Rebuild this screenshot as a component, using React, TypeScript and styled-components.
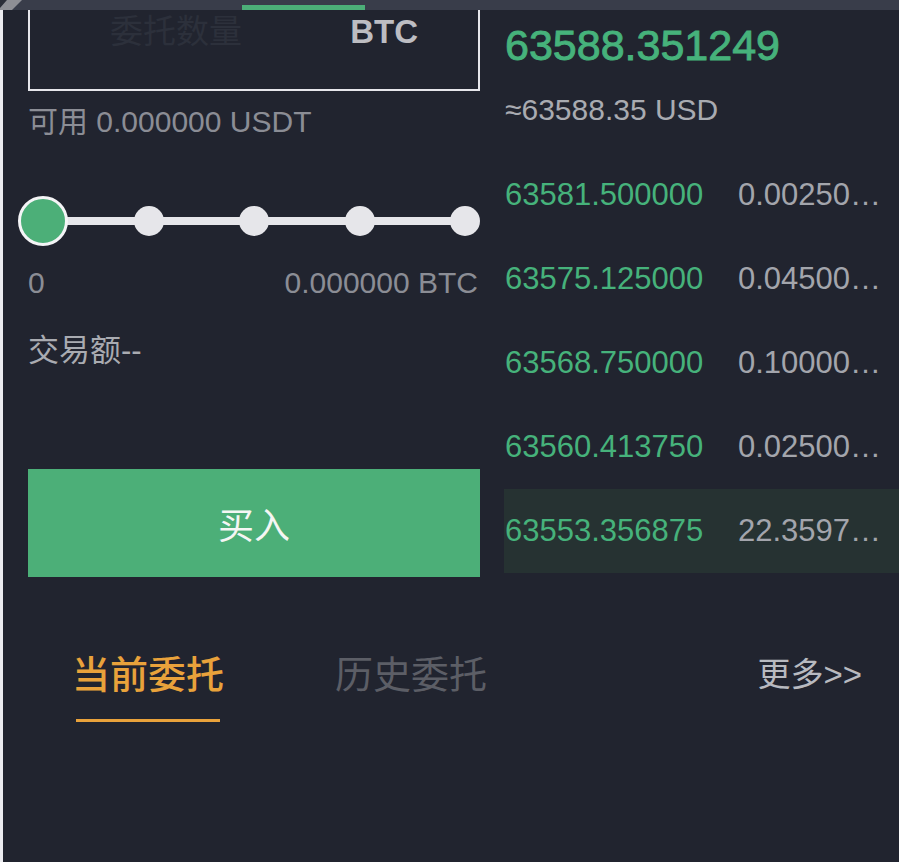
import React from 'react'
import styled, { createGlobalStyle } from 'styled-components'

const GlobalStyle = createGlobalStyle`
    html, body {
        margin: 0;
        padding: 0;
        background: #21242f;
    }
    body {
        font-family: "Liberation Sans", "Noto Sans CJK SC", sans-serif;
        -webkit-font-smoothing: antialiased;
    }
`

const green = '#4caf78'
const greenText = '#46b27b'

const Page = styled.div`
    min-height: 100vh;
    display: flex;
    flex-direction: column;
    background: #21242f;
    overflow: hidden;
`

const TopBar = styled.div`
    height: 10px;
    flex-shrink: 0;
    display: flex;
    align-items: flex-end;
    background: #393d4a;
`

const Corner = styled.svg`
    display: block;
    width: 24px;
    height: 10px;
`

const TopIndicator = styled.div`
    width: 123px;
    height: 5px;
    margin-left: 218px;
    background: ${green};
`

const Body = styled.div`
    flex: 1;
    display: flex;
`

const Edge = styled.div`
    width: 3px;
    flex-shrink: 0;
    background: #ececf0;
`

const Content = styled.div`
    flex: 1;
    display: flex;
    flex-direction: column;
    padding-left: 25px;
`

const TradeRow = styled.div`
    display: flex;
    gap: 24px;
`

const LeftCol = styled.div`
    width: 452px;
    flex-shrink: 0;
    display: flex;
    flex-direction: column;
`

const AmountBox = styled.div`
    box-sizing: border-box;
    height: 81px;
    border: 2px solid #e6e6eb;
    border-top: none;
    display: flex;
    justify-content: space-between;
    align-items: flex-start;
    padding: 2px 60px 0 80px;
    font-size: 33px;
    line-height: 40px;
`

const Placeholder = styled.span`
    color: #2c303b;
`

const Unit = styled.span`
    color: #bdbdc2;
    font-weight: 700;
`

const InfoText = styled.div<{ $tone?: 'dim' | 'light' }>`
    font-size: 30px;
    line-height: 36px;
    color: ${p => (p.$tone === 'light' ? '#a9abb1' : '#8b8d95')};
    white-space: nowrap;
`

const Available = styled(InfoText)`
    margin-top: 13px;
`

const SliderWrap = styled.div`
    position: relative;
    height: 50px;
    margin-top: 56px;
    display: flex;
    align-items: center;
    justify-content: space-between;
`

const Track = styled.div`
    position: absolute;
    left: 15px;
    right: 15px;
    top: 21px;
    height: 8px;
    background: #e6e6ea;
`

const Stop = styled.div`
    position: relative;
    width: 30px;
    height: 30px;
    border-radius: 50%;
    background: #e6e6ea;
`

const Thumb = styled.div`
    position: absolute;
    left: -10px;
    top: 0;
    box-sizing: border-box;
    width: 50px;
    height: 50px;
    border-radius: 50%;
    border: 3px solid #f4f4f6;
    background: ${green};
`

const RangeLabels = styled.div`
    display: flex;
    justify-content: space-between;
    margin-top: 19px;
    padding-right: 2px;
`

const Turnover = styled(InfoText)`
    margin-top: 32px;
    font-size: 31px;
`

const BuyButton = styled.button`
    margin-top: 100px;
    height: 108px;
    border: none;
    padding: 0;
    background: ${green};
    color: #f4f6f4;
    font-family: inherit;
    font-size: 36px;
    cursor: pointer;
`

const RightCol = styled.div`
    flex: 1;
    display: flex;
    flex-direction: column;
    padding-top: 10px;
`

const LastPrice = styled.div`
    font-size: 43px;
    line-height: 50px;
    font-weight: 400;
    -webkit-text-stroke: 0.9px ${greenText};
    color: ${greenText};
    padding-left: 1px;
`

const FiatPrice = styled(InfoText)`
    margin-top: 22px;
    padding-left: 1px;
`

const Book = styled.div`
    margin-top: 25px;
    display: flex;
    flex-direction: column;
`

const BookRow = styled.div<{ $active?: boolean }>`
    height: 84px;
    display: flex;
    align-items: center;
    padding-left: 1px;
    font-size: 31px;
    background: ${p => (p.$active ? '#263232' : 'transparent')};
`

const Price = styled.span`
    width: 233px;
    flex-shrink: 0;
    color: ${greenText};
`

const Qty = styled.span`
    width: 150px;
    color: #a3a5ac;
    white-space: nowrap;
    overflow: hidden;
    text-overflow: ellipsis;
`

const Tabs = styled.div`
    margin-top: 77px;
    display: flex;
    align-items: flex-start;
    padding-left: 44px;
    padding-right: 37px;
`

const Tab = styled.div<{ $active?: boolean }>`
    display: flex;
    flex-direction: column;
    align-items: center;
    margin-right: 111px;
    font-size: 38px;
    line-height: 42px;
    font-weight: ${p => (p.$active ? 500 : 400)};
    color: ${p => (p.$active ? '#e9a23b' : '#5c5e66')};
    cursor: pointer;
`

const TabLine = styled.div`
    width: 144px;
    height: 3px;
    margin-top: 23px;
    background: #e9a23b;
`

const More = styled.div`
    margin-left: auto;
    font-size: 33px;
    line-height: 42px;
    color: #b8bac0;
    cursor: pointer;
`

interface Order {
    price: string
    qty: string
}

const orders: Order[] = [
    { price: '63581.500000', qty: '0.00250000' },
    { price: '63575.125000', qty: '0.04500000' },
    { price: '63568.750000', qty: '0.10000000' },
    { price: '63560.413750', qty: '0.02500000' },
    { price: '63553.356875', qty: '22.35970000' },
]

export default function App() {
    return (
        <>
            <GlobalStyle />
            <Page>
                <TopBar>
                    <Corner viewBox="0 0 24 10">
                        <rect x="0" y="0" width="24" height="10" fill="#393d4a" />
                        <polygon points="0,0 7,0 0,8" fill="#2b2e38" />
                        <polygon points="7,0 22,0 12,10 0,10 0,8" fill="#8e8f95" />
                    </Corner>
                    <TopIndicator />
                </TopBar>
                <Body>
                    <Edge />
                    <Content>
                        <TradeRow>
                            <LeftCol>
                                <AmountBox>
                                    <Placeholder>委托数量</Placeholder>
                                    <Unit>BTC</Unit>
                                </AmountBox>
                                <Available>可用 0.000000 USDT</Available>
                                <SliderWrap>
                                    <Track />
                                    {[0, 1, 2, 3, 4].map(i => (
                                        <Stop key={i} />
                                    ))}
                                    <Thumb />
                                </SliderWrap>
                                <RangeLabels>
                                    <InfoText>0</InfoText>
                                    <InfoText>0.000000 BTC</InfoText>
                                </RangeLabels>
                                <Turnover $tone="light">交易额--</Turnover>
                                <BuyButton>买入</BuyButton>
                            </LeftCol>
                            <RightCol>
                                <LastPrice>63588.351249</LastPrice>
                                <FiatPrice $tone="light">≈63588.35 USD</FiatPrice>
                                <Book>
                                    {orders.map((o, i) => (
                                        <BookRow key={o.price} $active={i === orders.length - 1}>
                                            <Price>{o.price}</Price>
                                            <Qty>{o.qty}</Qty>
                                        </BookRow>
                                    ))}
                                </Book>
                            </RightCol>
                        </TradeRow>
                        <Tabs>
                            <Tab $active>
                                当前委托
                                <TabLine />
                            </Tab>
                            <Tab>历史委托</Tab>
                            <More>更多&gt;&gt;</More>
                        </Tabs>
                    </Content>
                </Body>
            </Page>
        </>
    )
}
